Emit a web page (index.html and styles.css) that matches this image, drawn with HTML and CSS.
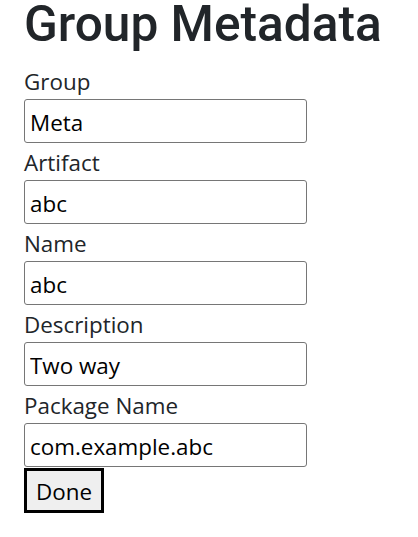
FILE: index.html
```html
<!DOCTYPE html>
<html lang="en">
<head>
<meta charset="utf-8">
<title>Group Metadata</title>
<link rel="stylesheet" href="styles.css">
</head>
<body>
<main class="page">
  <h1 class="title">Group Metadata</h1>
  <form class="form">
    <label class="field-label" for="group">Group</label>
    <input class="field-input" id="group" type="text" value="Meta">
    <label class="field-label" for="artifact">Artifact</label>
    <input class="field-input" id="artifact" type="text" value="abc">
    <label class="field-label" for="name">Name</label>
    <input class="field-input" id="name" type="text" value="abc">
    <label class="field-label" for="description">Description</label>
    <input class="field-input" id="description" type="text" value="Two way">
    <label class="field-label" for="package">Package Name</label>
    <input class="field-input" id="package" type="text" value="com.example.abc">
    <button class="done-button" type="button">Done</button>
  </form>
</main>
</body>
</html>
```
FILE: styles.css
```css
html, body {
  margin: 0;
  padding: 0;
  background: #ffffff;
}

body {
  font-family: "Open Sans", "Noto Sans", sans-serif;
  font-size: 22.4px;
  color: #212529;
}

.page {
  padding: 0 24px;
}

.title {
  margin: 0 0 13px;
  font-family: Roboto, "Open Sans", sans-serif;
  font-weight: 500;
  font-size: 49.6px;
  line-height: 49px;
  color: #212529;
  white-space: nowrap;
}

.form {
  display: flex;
  flex-direction: column;
  align-items: flex-start;
}

.field-label {
  display: block;
  padding-top: 5px;
  margin-bottom: 2px;
  line-height: 30px;
  color: #212529;
}

.field-input {
  box-sizing: border-box;
  width: 283px;
  height: 44px;
  margin: 0;
  padding: 2px 5px 0;
  border: 1px solid #767676;
  border-radius: 3px;
  background: #ffffff;
  font-family: "Open Sans", "Noto Sans", sans-serif;
  font-size: 22.4px;
  color: #000000;
  outline: none;
}

.done-button {
  box-sizing: border-box;
  margin-top: 1px;
  width: 80px;
  height: 45px;
  padding: 1px 0 0;
  border: 3px solid #000000;
  border-radius: 0;
  background: #efefef;
  font-family: "Open Sans", "Noto Sans", sans-serif;
  font-size: 22.4px;
  color: #000000;
  text-align: center;
}
```
